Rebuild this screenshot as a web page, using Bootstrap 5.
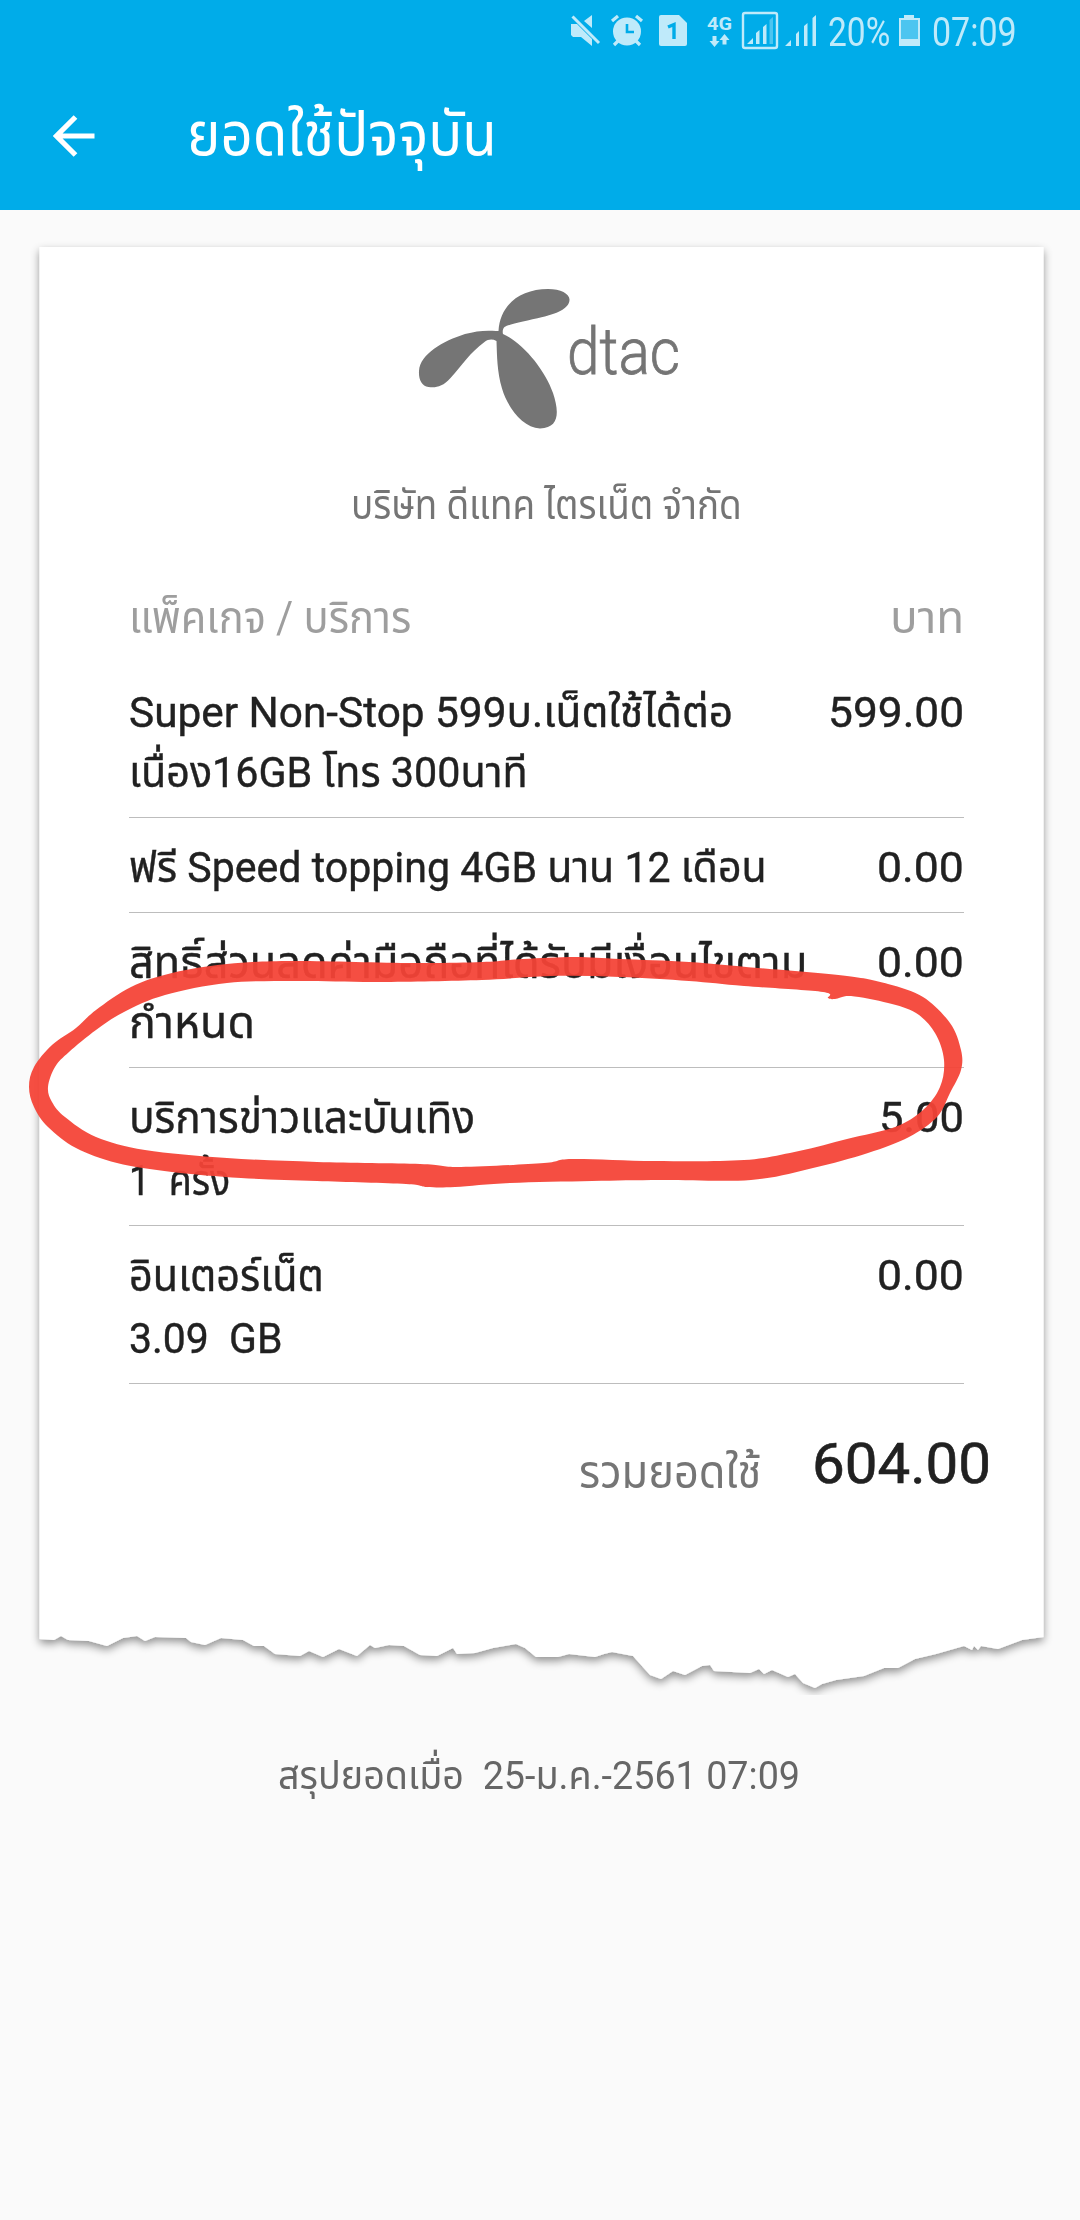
<!doctype html>
<html lang="th">
<head>
<meta charset="utf-8">
<meta name="viewport" content="width=device-width, initial-scale=1">
<title>ยอดใช้ปัจจุบัน</title>
<link rel="stylesheet" href="https://cdn.jsdelivr.net/npm/bootstrap@5.3.0/dist/css/bootstrap.min.css">
<style>
body{background:#fafafa;color:#212121;font-family:Roboto,"Noto Sans Thai","Noto Sans",sans-serif;width:1080px;height:2220px;overflow:hidden}
.topbar{background:#00ace9;height:210px}
.statusbar{height:62px;padding-right:66px;color:#bfeafa}
.statusbar svg{height:60px;flex:none}
.status-text{font-size:40px;line-height:60px;padding-top:3px;white-space:nowrap}
.titlebar{height:148px;padding-left:53px}
.titlebar h1{font-size:60px;line-height:80px;margin:0 0 3px 92px}
.fit{display:inline-block;white-space:pre;transform-origin:0 50%}
.fit-end{transform-origin:100% 50%}
.receipt{height:1443px;margin-top:37px;padding-top:36px}
.paper{left:0;top:-37px;width:1080px;height:1520px;z-index:-1}
.logo{width:270px;height:150px;margin-left:417px;overflow:visible}
.company{font-size:41px;line-height:50px;color:#757575;padding-left:351px;margin-top:47px}
.lines{margin:0 116px 0 129px}
.line-head{font-size:44px;line-height:60px;color:#9e9e9e;margin-top:58px}
.item{font-size:42px;line-height:60px;padding:20px 0 14px;border-bottom:1px solid #bdbdbd;-webkit-text-stroke:.4px #212121}
.item:nth-child(2){padding-top:35px}
.thai{font-size:45px}
.item .thai{display:inline-block;height:60px;vertical-align:top}
.usage{margin-top:3px}
.total{margin-top:58px;padding-right:89px}
.total-label{font-size:46px;line-height:60px;color:#757575;margin-right:61px}
.total-sum{font-size:55px;line-height:60px;margin-top:-8px;-webkit-text-stroke:.6px #212121}
.asof{font-size:39px;line-height:50px;color:#666;margin-top:61px;padding-left:278px}
.marker{left:0;top:940px;width:1080px;height:260px}
</style>
<script src="https://cdn.jsdelivr.net/npm/bootstrap@5.3.0/dist/js/bootstrap.bundle.min.js"></script>
</head>
<body class="position-relative">
<header class="topbar">
  <div class="statusbar d-flex justify-content-end">
    <svg width="32" viewBox="568 0 32 60" fill="currentColor"><path d="M570 24h6l15 15v7l-11-9h-8l-2-2zM591 15v13l-8-7z"/><path d="M571.500 16.500 598 43" stroke="currentColor" stroke-width="3"/></svg>
    <svg width="34" viewBox="609 0 34 60" style="margin-left:9px" fill="currentColor"><circle cx="626" cy="31.500" r="14"/><path d="M611 21l6-5M641 21l-6-5M613 45l5-5M639 45l-5-5" stroke="currentColor" stroke-width="3.200"/><path d="M626 24v8h7" fill="none" stroke="#00ace9" stroke-width="2.600"/></svg>
    <svg width="28" viewBox="658 0 28 60" style="margin-left:15px"><path fill="currentColor" d="M660 15h18l8 8v21a2 2 0 0 1-2 2h-24a2 2 0 0 1-2-2V17a2 2 0 0 1 2-2z"/><path d="M667 27l6-2.500V39" fill="none" stroke="#00ace9" stroke-width="3.400"/></svg>
    <svg width="26" viewBox="706 0 26 60" style="margin-left:20px" fill="currentColor"><text x="706" y="30" font-size="19" font-weight="700" textLength="25" lengthAdjust="spacingAndGlyphs">4G</text><path d="M711.500 36h4v5h3l-5 6-5-6h3zM721.500 44.500h4v-4.500h3l-5-6-5 6h3z"/></svg>
    <svg width="38" viewBox="740 0 38 60" style="margin-left:8px" fill="currentColor"><rect x="742" y="13" width="34" height="35" rx="2" fill="none" stroke="currentColor" stroke-width="2.400"/><path d="M746 44l6-6v6zM755 33l3.500-3v14H755zM762 27l3.500-3v20H762z"/><path opacity=".4" d="M768.500 20l3.500-3v27h-3.500z"/></svg>
    <svg width="33" viewBox="783 0 33 60" style="margin-left:5px" fill="currentColor"><path d="M784 46l6-6v6zM795 34l3-3v15h-3zM803 26l3.500-3v23H803zM811.500 18l3.500-3v31h-3.500z"/></svg>
    <div class="ms-2" style="width:67px;padding-left:3px"><span class="status-text fit" data-w="62">20%</span></div>
    <svg width="22" viewBox="897 0 22 60" style="margin-left:6px"><path fill="currentColor" d="M903 15h10v3h6v28h-21V18h5z"/><path fill="#4cc5f0" d="M900 20h17v19h-17z"/></svg>
    <div style="width:82px;margin-left:12px"><span class="status-text fit" data-w="85">07:09</span></div>
  </div>
  <div class="titlebar d-flex align-items-center">
    <svg width="42" height="42" viewBox="53 116 42 42" fill="none" stroke="#fff" stroke-width="5.200"><path d="M94.500 137H57M75.500 118 56.500 137l19 19"/></svg>
    <h1 class="fw-normal text-white"><span class="fit" data-w="310">ยอดใช้ปัจจุบัน</span></h1>
  </div>
</header>

<main class="receipt position-relative">
  <svg class="paper position-absolute" viewBox="0 210 1080 1520">
    <defs><filter id="shade" x="-5%" y="-5%" width="110%" height="110%"><feDropShadow dx="0" dy="4" stdDeviation="4.500" flood-color="#000" flood-opacity=".42"/></filter>
    <clipPath id="sheetclip"><path d="M0 210H1080V1695H0z"/></clipPath></defs>
    <g clip-path="url(#sheetclip)"><path filter="url(#shade)" fill="#fff" d="M39.500 247H1043.500V1637L1022 1640 998 1649 981 1646 978 1650 974 1646 972 1650 964 1646 936 1654 915 1659 898 1668 884 1668 864 1676 836 1680 822 1684 815 1688 803 1683 795 1674 788 1677 772 1670 764 1674 759 1669 750 1673 714 1671 710 1665 702 1666 685 1675 673 1671 661 1679 650 1675 633 1656 612 1652 604 1654 595 1657 569 1654 558 1657 536 1657 525 1648 516 1644 493 1648 475 1653 457 1654 453 1648 437 1656 420 1655 404 1646 389 1645 375 1648 370 1645 357 1656 339 1649 323 1657 309 1651 300 1656 275 1654 264 1646 254 1646 243 1640 221 1638 205 1645 191 1642 186 1638 155 1637 145 1641 137 1636 123 1638 107 1646 89 1641 68 1640 61 1636 54 1640 39.500 1639z"/></g>
  </svg>
  <svg class="logo d-block" viewBox="417 283 270 150" fill="#757575">
    <path d="M498.500 331C500 304 521 289 548 289c13 0 22 5 21.500 11-.5 9-14 14-27 17-16 4-33 7-38 10-2 2-2 5-1.500 7 20 9 42 36 50 59 6 18 7 35-13 35.500-17-1-32-20-38-40-5-17-5-33-5.500-47.500-4-2-8-2-12 1-14 10-23 24-34 36-8 9-15 10-22 9-7-1-10-8-9.500-16 1-17 24-30 46-37 11-3 21-4 31-3z"/>
    <text x="567" y="374" font-size="65" font-weight="300" textLength="113" lengthAdjust="spacingAndGlyphs" stroke="#757575" stroke-width=".8">dtac</text>
  </svg>
  <div class="company"><span class="fit" data-w="391">บริษัท ดีแทค ไตรเน็ต จำกัด</span></div>

  <section class="lines">
    <div class="line-head d-flex justify-content-between"><span class="fit" data-w="282">แพ็คเกจ / บริการ</span><span class="fit fit-end" data-w="74">บาท</span></div>
    <div class="item d-flex justify-content-between"><div><span class="fit" data-w="604">Super Non-Stop 599บ.เน็ตใช้ได้ต่อ</span><br><span class="fit" data-w="399">เนื่อง16GB โทร 300นาที</span></div><span class="fit fit-end" data-w="136">599.00</span></div>
    <div class="item d-flex justify-content-between"><span class="fit" data-w="638">ฟรี Speed topping 4GB นาน 12 เดือน</span><span class="fit fit-end" data-w="87">0.00</span></div>
    <div class="item d-flex justify-content-between"><div><span class="fit thai" data-w="678">สิทธิ์ส่วนลดค่ามือถือที่ได้รับมีเงื่อนไขตาม</span><br><span class="fit thai" data-w="126">กำหนด</span></div><span class="fit fit-end" data-w="87">0.00</span></div>
    <div class="item d-flex justify-content-between"><div><span class="fit thai" data-w="346">บริการข่าวและบันเทิง</span><div class="usage"><span class="fit" data-w="101">1  ครั้ง</span></div></div><span class="fit fit-end" data-w="85">5.00</span></div>
    <div class="item d-flex justify-content-between"><div><span class="fit thai" data-w="195">อินเตอร์เน็ต</span><div class="usage"><span class="fit" data-w="154">3.09  GB</span></div></div><span class="fit fit-end" data-w="87">0.00</span></div>
  </section>
  <div class="total d-flex justify-content-end"><div class="total-label"><span class="fit fit-end" data-w="182">รวมยอดใช้</span></div><div class="total-sum"><span class="fit fit-end" data-w="179">604.00</span></div></div>
</main>
<footer class="asof"><span class="fit" data-w="522">สรุปยอดเมื่อ  25-ม.ค.-2561 07:09</span></footer>

<svg class="marker position-absolute" viewBox="0 940 1080 260"><path id="loop" fill="#f44336" fill-opacity=".94" fill-rule="evenodd"/></svg>
<script>
// Hand-drawn marker loop: outer and inner outline of the stroke
const outer=[29,1087,34,1067,52,1045,76,1028,96,1010,131,987,172,973,227,964,293,961,413,963,482,962,523,959,575,957,620,959,689,962,758,968,847,976,888,984,923,997,950,1023,961,1050,961,1070,950,1093,937,1117,909,1137,868,1153,813,1168,751,1180,661,1180,592,1181,510,1183,455,1187,427,1187,406,1184,317,1181,241,1178,172,1172,117,1163,76,1148,48,1127,34,1107];
const inner=[48,1087,55,1067,69,1052,96,1030,124,1012,165,995,227,983,296,981,379,982,482,980,551,976,620,977,689,981,744,986,823,992,828,998,835,999,851,996,888,1003,916,1013,935,1033,944,1060,940,1087,923,1110,895,1127,847,1139,799,1151,744,1160,654,1161,572,1159,544,1163,461,1167,420,1164,317,1162,227,1158,145,1150,96,1137,65,1117,52,1102];
function smooth(a){
  const n=a.length/2,p=i=>[a[2*((i+n)%n)],a[2*((i+n)%n)+1]];
  let d='M'+p(0);
  for(let i=0;i<n;i++){
    const [a0,b,c,e]=[p(i-1),p(i),p(i+1),p(i+2)];
    d+='C'+(b[0]+(c[0]-a0[0])/6)+' '+(b[1]+(c[1]-a0[1])/6)+' '+(c[0]-(e[0]-b[0])/6)+' '+(c[1]-(e[1]-b[1])/6)+' '+c[0]+' '+c[1];
  }
  return d+'z';
}
document.getElementById('loop').setAttribute('d',smooth(outer)+smooth(inner));
// Condense or widen each label to its column width
document.querySelectorAll('.fit').forEach(s=>{s.style.transform='scaleX('+(s.dataset.w/s.offsetWidth)+')'});
</script>
</body>
</html>
